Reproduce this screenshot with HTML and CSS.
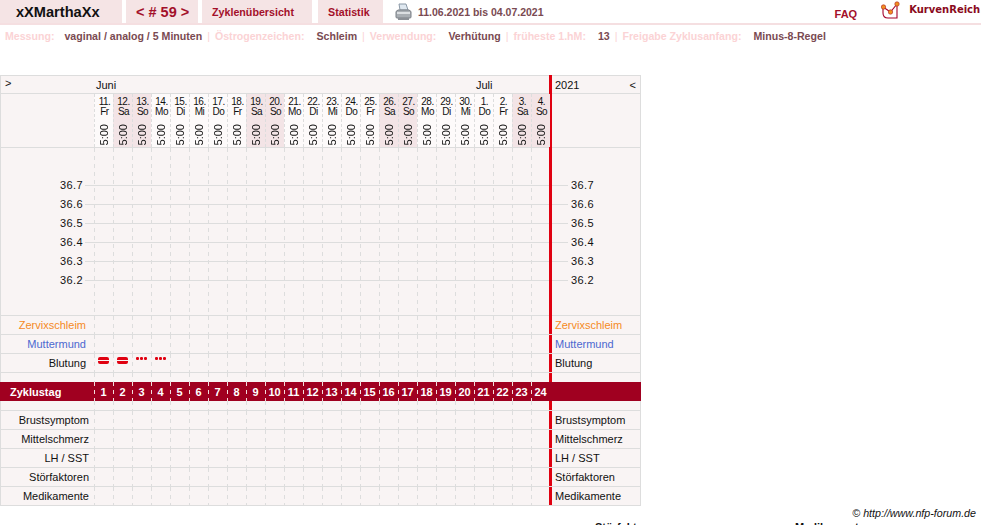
FILE: index.html
```html
<!DOCTYPE html>
<html lang="de">
<head>
    <meta charset="UTF-8">
    <title>Zyklusblatt</title>
    <link rel="stylesheet" href="styles.css">
</head>
<body>
    <header class="topbar">
        <div class="tab tab-name">xXMarthaXx</div>
        <div class="tab tab-cycle">&lt; # 59 &gt;</div>
        <a href="#" class="tab tab-overview">Zyklenübersicht</a>
        <a href="#" class="tab tab-stats">Statistik</a>
        <svg class="printer" width="17" height="18" viewBox="0 0 17 18">
            <path d="M4 1h7l2 6H5z" fill="#dfe8f0" stroke="#8a98a6" stroke-width="1"/>
            <path d="M1 8.500 3 7h11l2 1.500V14a1 1 0 0 1-1 1H2a1 1 0 0 1-1-1z" fill="#a9aeb3" stroke="#7b8087" stroke-width="1"/>
            <rect x="2" y="9" width="13" height="2" fill="#dcdfe2"/>
            <path d="M3 15h11v2H3z" fill="#8c9096"/>
        </svg>
        <div class="dates">11.06.2021 bis 04.07.2021</div>
        <a href="#" class="faq">FAQ</a>
        <svg class="logo" width="20" height="18" viewBox="0 0 20 18">
            <path d="M2 7v5q0 5 5 5h9V4" fill="none" stroke="#a3002a" stroke-width="1.100"/>
            <path d="M2 6l7.500 5L16 3" fill="none" stroke="#a3002a" stroke-width="1.100"/>
            <circle cx="2.500" cy="6" r="2.200" fill="#f09020" stroke="#b8302a" stroke-width=".7"/>
            <circle cx="9.500" cy="11" r="2.200" fill="#f09020" stroke="#b8302a" stroke-width=".7"/>
            <circle cx="16" cy="3" r="2.200" fill="#f09020" stroke="#b8302a" stroke-width=".7"/>
        </svg>
        <div class="brand">KurvenReich</div>
    </header>

    <div class="meta">
        <span class="meta-label">Messung:</span><span class="meta-value">vaginal / analog / 5 Minuten</span><span class="meta-sep">|</span>
        <span class="meta-label">Östrogenzeichen:</span><span class="meta-value">Schleim</span><span class="meta-sep">|</span>
        <span class="meta-label">Verwendung:</span><span class="meta-value">Verhütung</span><span class="meta-sep">|</span>
        <span class="meta-label">früheste 1.hM:</span><span class="meta-value">13</span><span class="meta-sep">|</span>
        <span class="meta-label">Freigabe Zyklusanfang:</span><span class="meta-value">Minus-8-Regel</span>
    </div>

    <div class="sheet">
        <div class="row row-month">
            <div class="label toggle">&gt;</div>
            <div class="days months"><span class="month-june">Juni</span><span class="month-july">Juli</span></div>
            <div class="bar"></div>
            <div class="side side-year"><span>2021</span><span>&lt;</span></div>
        </div>

        <div class="row row-dates">
            <div class="label"></div>
            <div class="days dates-grid">
                <div class="day"><b>11.<br>Fr</b><i>5:00</i></div>
                <div class="day weekend"><b>12.<br>Sa</b><i>5:00</i></div>
                <div class="day weekend"><b>13.<br>So</b><i>5:00</i></div>
                <div class="day"><b>14.<br>Mo</b><i>5:00</i></div>
                <div class="day"><b>15.<br>Di</b><i>5:00</i></div>
                <div class="day"><b>16.<br>Mi</b><i>5:00</i></div>
                <div class="day"><b>17.<br>Do</b><i>5:00</i></div>
                <div class="day"><b>18.<br>Fr</b><i>5:00</i></div>
                <div class="day weekend"><b>19.<br>Sa</b><i>5:00</i></div>
                <div class="day weekend"><b>20.<br>So</b><i>5:00</i></div>
                <div class="day"><b>21.<br>Mo</b><i>5:00</i></div>
                <div class="day"><b>22.<br>Di</b><i>5:00</i></div>
                <div class="day"><b>23.<br>Mi</b><i>5:00</i></div>
                <div class="day"><b>24.<br>Do</b><i>5:00</i></div>
                <div class="day"><b>25.<br>Fr</b><i>5:00</i></div>
                <div class="day weekend"><b>26.<br>Sa</b><i>5:00</i></div>
                <div class="day weekend"><b>27.<br>So</b><i>5:00</i></div>
                <div class="day"><b>28.<br>Mo</b><i>5:00</i></div>
                <div class="day"><b>29.<br>Di</b><i>5:00</i></div>
                <div class="day"><b>30.<br>Mi</b><i>5:00</i></div>
                <div class="day"><b>1.<br>Do</b><i>5:00</i></div>
                <div class="day"><b>2.<br>Fr</b><i>5:00</i></div>
                <div class="day weekend"><b>3.<br>Sa</b><i>5:00</i></div>
                <div class="day weekend"><b>4.<br>So</b><i>5:00</i></div>
            </div>
            <div class="bar"></div>
            <div class="side"></div>
        </div>

        <div class="row row-chart">
            <div class="label scale">
                <span>36.7</span><span>36.6</span><span>36.5</span><span>36.4</span><span>36.3</span><span>36.2</span>
            </div>
            <div class="days dashed chart-lines"></div>
            <div class="bar"></div>
            <div class="side scale scale-right">
                <span>36.7</span><span>36.6</span><span>36.5</span><span>36.4</span><span>36.3</span><span>36.2</span>
            </div>
        </div>

        <div class="row"><div class="label label-inset text-orange">Zervixschleim</div><div class="days dashed"></div><div class="bar"></div><div class="side text-orange">Zervixschleim</div></div>
        <div class="row"><div class="label label-inset text-blue">Muttermund</div><div class="days dashed"></div><div class="bar"></div><div class="side text-blue">Muttermund</div></div>
        <div class="row">
            <div class="label label-inset">Blutung</div>
            <div class="days dashed bleeding">
                <div class="flow-heavy"></div>
                <div class="flow-heavy"></div>
                <div class="flow-light"></div>
                <div class="flow-light"></div>
            </div>
            <div class="bar"></div>
            <div class="side">Blutung</div>
        </div>

        <div class="row row-gap-top"><div class="label"></div><div class="days dashed"></div><div class="bar"></div><div class="side"></div></div>

        <div class="row row-cycle">
            <div class="label">Zyklustag</div>
            <div class="days cycle-days">
                <span>1</span><span>2</span><span>3</span><span>4</span><span>5</span><span>6</span><span>7</span><span>8</span>
                <span>9</span><span>10</span><span>11</span><span>12</span><span>13</span><span>14</span><span>15</span><span>16</span>
                <span>17</span><span>18</span><span>19</span><span>20</span><span>21</span><span>22</span><span>23</span><span>24</span>
            </div>
            <div class="bar"></div>
            <div class="side"></div>
        </div>

        <div class="row row-gap-bottom"><div class="label"></div><div class="days dashed"></div><div class="bar"></div><div class="side"></div></div>

        <div class="row"><div class="label">Brustsymptom</div><div class="days dashed"></div><div class="bar"></div><div class="side">Brustsymptom</div></div>
        <div class="row"><div class="label">Mittelschmerz</div><div class="days dashed"></div><div class="bar"></div><div class="side">Mittelschmerz</div></div>
        <div class="row"><div class="label">LH / SST</div><div class="days dashed"></div><div class="bar"></div><div class="side">LH / SST</div></div>
        <div class="row"><div class="label">Störfaktoren</div><div class="days dashed"></div><div class="bar"></div><div class="side">Störfaktoren</div></div>
        <div class="row"><div class="label">Medikamente</div><div class="days dashed"></div><div class="bar"></div><div class="side">Medikamente</div></div>
    </div>

    <div class="copyright">© http://www.nfp-forum.de</div>

    <div class="legend">
        <div class="legend-col">Störfaktoren</div>
        <div class="legend-col">Medikamente</div>
    </div>
</body>
</html>
```

FILE: styles.css
```css
html, body {
    margin: 0;
    padding: 0;
    height: 525px;
    overflow: hidden;
    background: #fff;
    font-family: "Liberation Sans", Arial, sans-serif;
    font-size: 11px;
    color: #111;
}

a {
    text-decoration: none;
}

/* top navigation */
.topbar {
    display: flex;
    align-items: flex-start;
    height: 25px;
    box-sizing: border-box;
    border-bottom: 2px solid #f5dfe1;
}

.tab {
    height: 23px;
    box-sizing: border-box;
    display: flex;
    align-items: center;
    background: #f5e4e5;
    color: #a3102a;
    font-weight: bold;
    font-size: 10.700px;
}

.tab-name {
    width: 122px;
    padding-left: 16px;
    color: #111;
    font-size: 14.600px;
}

.tab-cycle {
    width: 72px;
    margin-left: 4px;
    padding-left: 10px;
    font-size: 14.500px;
}

.tab-overview {
    width: 110px;
    margin-left: 4px;
    padding-left: 10px;
}

.tab-stats {
    width: 65px;
    margin-left: 6px;
    padding-left: 10px;
}

.printer {
    margin: 3px 0 0 12px;
}

.dates {
    margin: 6px 0 0 6px;
    font-weight: bold;
    font-size: 10.500px;
    color: #7a4a52;
}

.faq {
    margin: 8px 0 0 291px;
    font-weight: bold;
    color: #a3102a;
}

.logo {
    margin: 1px 0 0 24px;
}

.brand {
    margin: 4px 0 0 8px;
    font-family: "DejaVu Sans", sans-serif;
    font-weight: bold;
    font-size: 10px;
    color: #8a0a20;
}

/* settings line */
.meta {
    display: flex;
    align-items: center;
    height: 22px;
    padding-left: 5px;
    font-weight: bold;
    font-size: 10.600px;
}

.meta-label {
    color: #fbd3d5;
    margin-right: 12px;
}

.meta-label:first-child {
    margin-right: 10px;
}

.meta-value {
    color: #7a4a52;
}

.meta-sep {
    color: #fbd3d5;
    font-weight: normal;
    margin: 0 5px;
}

/* chart sheet */
.sheet {
    width: 641px;
    margin-top: 28px;
    background: #f9f4f4;
}

.row {
    display: grid;
    grid-template-columns: 94px 455px 3px 89px;
    height: 19px;
}

.label,
.side,
.days {
    box-sizing: border-box;
    border-bottom: 1px solid #ddd;
}

.label {
    display: flex;
    align-items: center;
    justify-content: flex-end;
    padding-right: 5px;
    border-left: 1px solid #ddd;
}

.label-inset {
    padding-right: 8px;
}

.side {
    display: flex;
    align-items: center;
    padding-left: 3px;
    border-right: 1px solid #ddd;
}

.bar {
    background: #e00010;
    border-bottom: 1px solid #e8d8d8;
    box-sizing: border-box;
}

.days {
    position: relative;
}

.dashed::before {
    content: '';
    position: absolute;
    top: 0;
    right: 0;
    bottom: 0;
    left: 0;
    background: repeating-linear-gradient(90deg, #ddd 0 1px, transparent 1px 19px);
    -webkit-mask-image: repeating-linear-gradient(#000 0 4px, transparent 4px 8px);
    mask-image: repeating-linear-gradient(#000 0 4px, transparent 4px 8px);
}

.text-orange {
    color: #f58a1f;
}

.text-blue {
    color: #4c68d0;
}

/* month and date header */
.row-month .label,
.row-month .days,
.row-month .side {
    border-top: 1px solid #ddd;
}

.row-month .bar,
.row-dates .bar,
.row-chart .bar {
    border-bottom: none;
}

.toggle {
    justify-content: flex-start;
    padding-left: 4px;
    padding-bottom: 3px;
}

.months {
    display: grid;
    grid-template-columns: 380px 75px;
    align-items: center;
    padding-left: 2px;
}

.side-year {
    justify-content: space-between;
    padding-right: 4px;
}

.row-dates {
    height: 54px;
}

.dates-grid {
    display: grid;
    grid-template-columns: repeat(24, 19px);
    background: #fdfafa;
}

.day {
    display: flex;
    flex-direction: column;
    align-items: center;
    justify-content: space-between;
    border-left: 1px dashed #ddd;
    padding: 3px 0 2px;
    overflow: hidden;
}

.weekend {
    background: #f3e4e6;
}

.day b {
    font-weight: normal;
    font-size: 10px;
    line-height: 10px;
    text-align: center;
    letter-spacing: -0.500px;
    padding-left: 1px;
}

.day i {
    font-style: normal;
    font-size: 11px;
    line-height: 13px;
    writing-mode: vertical-rl;
    transform: rotate(180deg);
}

/* temperature area */
.row-chart {
    height: 168px;
}

.scale {
    flex-direction: column;
    align-items: stretch;
    justify-content: flex-start;
    padding: 28px 0 0;
}

.scale span {
    display: flex;
    align-items: flex-start;
    justify-content: flex-end;
    height: 19px;
    line-height: 19px;
    letter-spacing: 0.400px;
}

.scale span::after {
    content: '';
    align-self: center;
    width: 9px;
    height: 1px;
    margin-left: 2px;
    background: #ddd;
}

.scale-right span {
    flex-direction: row-reverse;
}

.scale-right span::after {
    width: 16px;
    margin: 0 3px 0 0;
}

.chart-lines {
    background: linear-gradient(#ddd, #ddd) no-repeat 0 37px / 100% 1px,
                linear-gradient(#ddd, #ddd) no-repeat 0 56px / 100% 1px,
                linear-gradient(#ddd, #ddd) no-repeat 0 75px / 100% 1px,
                linear-gradient(#ddd, #ddd) no-repeat 0 94px / 100% 1px,
                linear-gradient(#ddd, #ddd) no-repeat 0 113px / 100% 1px,
                linear-gradient(#ddd, #ddd) no-repeat 0 132px / 100% 1px;
}

/* bleeding marks */
.bleeding {
    display: grid;
    grid-template-columns: repeat(24, 19px);
    justify-items: start;
}

.flow-heavy {
    width: 11px;
    height: 7px;
    margin: 3px 0 0 4px;
    background: linear-gradient(#e00010 0 3px, transparent 3px 4px, #e00010 4px);
    border-radius: 2px;
}

.flow-light {
    width: 12px;
    height: 3px;
    margin: 3px 0 0 4px;
    background: radial-gradient(circle at 1.500px 1.500px, #e00010 1.300px, transparent 1.700px) 0 0 / 4px 3px;
}

/* cycle day band */
.row-gap-top {
    height: 9px;
}

.row-gap-top .label,
.row-gap-top .days,
.row-gap-top .side,
.row-gap-top .bar {
    border-bottom: none;
}

.row-gap-bottom {
    height: 10px;
}

.row-cycle {
    background: #a00020;
    color: #fff;
    font-weight: bold;
}

.row-cycle .label,
.row-cycle .days,
.row-cycle .side {
    border: none;
}

.row-cycle .label {
    justify-content: flex-start;
    padding-left: 10px;
}

.row-cycle .bar {
    background: none;
    border-bottom: none;
}

.cycle-days {
    display: grid;
    grid-template-columns: repeat(24, 19px);
}

.cycle-days span {
    display: flex;
    align-items: center;
    justify-content: center;
    background: repeating-linear-gradient(#f3dcdc 0 4px, transparent 4px 8px) no-repeat 0 0 / 1px 100%;
}

/* footer */
.copyright {
    width: 976px;
    text-align: right;
    font-style: italic;
    font-size: 10.700px;
    line-height: 14px;
}

.legend {
    display: flex;
    padding: 1px 0 0 595px;
    font-weight: bold;
}

.legend-col {
    flex: none;
    width: 200px;
}
```
